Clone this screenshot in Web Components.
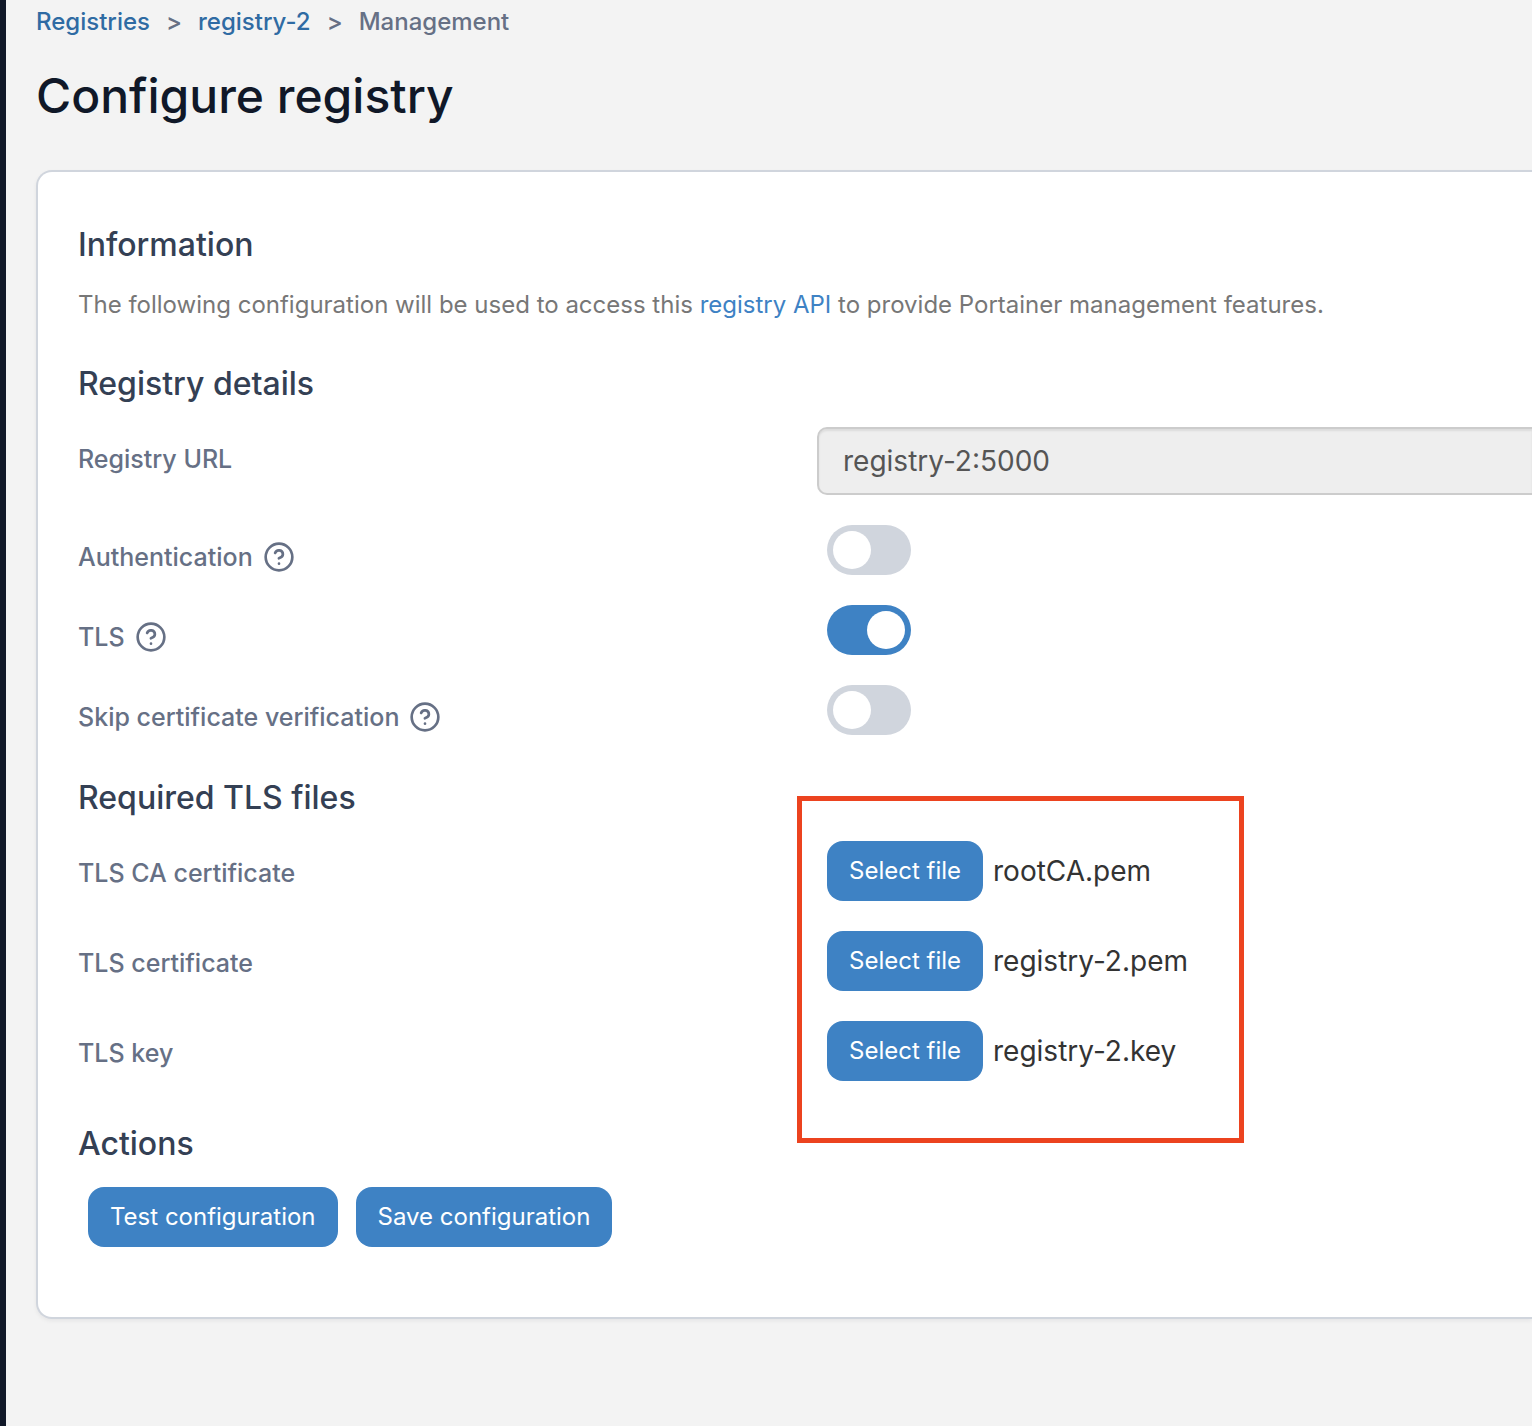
<!DOCTYPE html>
<html lang="en">
<head>
<meta charset="utf-8">
<meta name="viewport" content="width=device-width, initial-scale=1">
<title>Configure registry</title>
<style>
  :root {
    --blue: #3e82c4;
    --link: #2f6ba3;
    --gray-border: #d0d5dd;
    --label: #667085;
    --heading: #344054;
  }
  html, body { margin: 0; }
  body { background: #f3f3f3; font-family: Inter, "Liberation Sans", sans-serif; color: #333; overflow-x: hidden; }
  .text-link { color: var(--blue); text-decoration: none; }
</style>
</head>
<body>
<app-shell>
  <page-header slot="header" heading="Configure registry"></page-header>
  <config-card>
    <section-title>Information</section-title>
    <info-text>The following configuration will be used to access this <a class="text-link" href="#api">registry API</a> to provide Portainer management features.</info-text>
    <section-title>Registry details</section-title>
    <field-group>
      <text-field label="Registry URL" value="registry-2:5000"></text-field>
      <toggle-field label="Authentication"></toggle-field>
      <toggle-field label="TLS" checked></toggle-field>
      <toggle-field label="Skip certificate verification"></toggle-field>
    </field-group>
    <section-title>Required TLS files</section-title>
    <field-group highlight>
      <file-field label="TLS CA certificate" file="rootCA.pem"></file-field>
      <file-field label="TLS certificate" file="registry-2.pem"></file-field>
      <file-field label="TLS key" file="registry-2.key"></file-field>
    </field-group>
    <section-title>Actions</section-title>
    <action-bar>
      <app-button>Test configuration</app-button>
      <app-button>Save configuration</app-button>
    </action-bar>
  </config-card>
</app-shell>

<script>
  const base = `*, *::before, *::after { box-sizing: border-box; }`;
  const define = (name, render) => customElements.define(name, class extends HTMLElement {
    constructor() {
      super();
      this.attachShadow({ mode: 'open' });
    }
    connectedCallback() {
      this.shadowRoot.innerHTML = `<style>${base}</style>` + render(this);
    }
  });

  const buttonStyles = `
    button {
      display: block; height: 60px; margin: 0; padding: 0 22px; border: 0; border-radius: 16px;
      background: var(--blue); color: #fff; font-family: inherit; font-weight: 400;
      font-size: 24px; line-height: 36px; white-space: nowrap; cursor: pointer;
    }`;

  // Two-column row shared by every form field: label on the left, control on the right.
  const rowStyles = `
    :host { display: grid; grid-template-columns: minmax(0, 739fr) minmax(0, 715fr); align-items: start; }
    .label {
      display: flex; align-items: center; gap: 10px; padding-top: 14px;
      color: var(--label); font-size: 25px; line-height: 36px; font-weight: 500;
    }
    .label svg { flex: none; width: 32px; height: 32px; }`;

  const helpIcon = `
    <svg viewBox="0 0 24 24" fill="none" stroke="currentColor" stroke-width="2" stroke-linecap="round" stroke-linejoin="round" aria-hidden="true">
      <circle cx="12" cy="12" r="10"/>
      <path d="M9.09 9a3 3 0 0 1 5.83 1c0 2-3 3-3 3"/>
      <path d="M12 17h.01"/>
    </svg>`;

  define('app-shell', () => `
    <style>
      :host { display: grid; grid-template-columns: 6px minmax(0, 1fr); min-height: 100vh; }
      aside { background: #101828; }
      main { padding: 6px 0 30px 30px; }
    </style>
    <aside></aside>
    <main><slot name="header"></slot><slot></slot></main>`);

  define('page-header', el => `
    <style>
      :host { display: block; margin-bottom: 42px; }
      nav { display: flex; gap: 16px; font-size: 24px; line-height: 32px; font-weight: 500; color: var(--label); }
      a { color: var(--link); text-decoration: none; }
      h1 { margin: 26px 0 0; font-size: 48px; line-height: 64px; font-weight: 500; color: #101828; }
    </style>
    <nav aria-label="Breadcrumb">
      <a href="#registries">Registries</a><span>&gt;</span><a href="#registry-2">registry-2</a><span>&gt;</span><span>Management</span>
    </nav>
    <h1>${el.getAttribute('heading')}</h1>`);

  define('config-card', () => `
    <style>
      :host {
        display: block; box-sizing: border-box; padding: 53px 0 70px 40px; background: #fff;
        border: 2px solid var(--gray-border); border-right: 0; border-radius: 16px 0 0 16px;
        box-shadow: 0 2px 4px rgba(16, 24, 40, .06);
      }
    </style>
    <slot></slot>`);

  define('section-title', () => `
    <style>
      :host { display: block; margin: 43px 0 23px; }
      :host(:first-child) { margin-top: 0; }
      h2 { margin: 0; font-size: 32px; line-height: 40px; font-weight: 500; color: var(--heading); }
    </style>
    <h2><slot></slot></h2>`);

  define('info-text', () => `
    <style>
      :host { display: block; }
      p { margin: 0; font-size: 24px; line-height: 33px; color: #777; }
    </style>
    <p><slot></slot></p>`);

  define('field-group', el => `
    <style>
      :host { display: flex; flex-direction: column; gap: 30px; position: relative; }
      .frame {
        position: absolute; top: -45px; bottom: -62px; left: calc(100% * 739 / 1454 - 20px); width: 447px;
        border: 5px solid #ec431f; pointer-events: none;
      }
    </style>
    <slot></slot>${el.hasAttribute('highlight') ? '<div class="frame"></div>' : ''}`);

  define('text-field', el => `
    <style>
      ${rowStyles}
      input {
        width: 100%; height: 68px; margin: 0; padding: 0 24px; border: 2px solid #ccc; border-right: 0;
        border-radius: 10px 0 0 10px; background: #eee; color: #555; font-family: inherit; font-size: 28px;
        box-shadow: inset 0 2px 2px rgba(0, 0, 0, .075); outline: 0;
      }
    </style>
    <label class="label" for="control">${el.getAttribute('label')}</label>
    <input id="control" type="text" value="${el.getAttribute('value')}" readonly>`);

  define('toggle-field', el => `
    <style>
      ${rowStyles}
      input {
        appearance: none; display: flex; width: 84px; height: 50px; margin: 0 0 0 10px; padding: 6px;
        border-radius: 25px; background: var(--gray-border); cursor: pointer;
      }
      input::before { content: ""; width: 38px; height: 38px; border-radius: 50%; background: #fff; }
      input:checked { background: var(--blue); justify-content: flex-end; }
    </style>
    <label class="label" for="control">${el.getAttribute('label')}${helpIcon}</label>
    <input id="control" type="checkbox" role="switch" ${el.hasAttribute('checked') ? 'checked' : ''}>`);

  define('file-field', el => `
    <style>
      ${rowStyles}
      ${buttonStyles}
      .control { display: flex; align-items: center; gap: 10px; padding-left: 10px; font-size: 28px; line-height: 40px; }
    </style>
    <label class="label" for="control">${el.getAttribute('label')}</label>
    <div class="control"><button id="control" type="button">Select file</button><span>${el.getAttribute('file')}</span></div>`);

  define('action-bar', () => `
    <style>:host { display: flex; gap: 18px; padding-left: 10px; }</style>
    <slot></slot>`);

  define('app-button', () => `
    <style>:host { display: block; } ${buttonStyles}</style>
    <button type="button"><slot></slot></button>`);
</script>
</body>
</html>
